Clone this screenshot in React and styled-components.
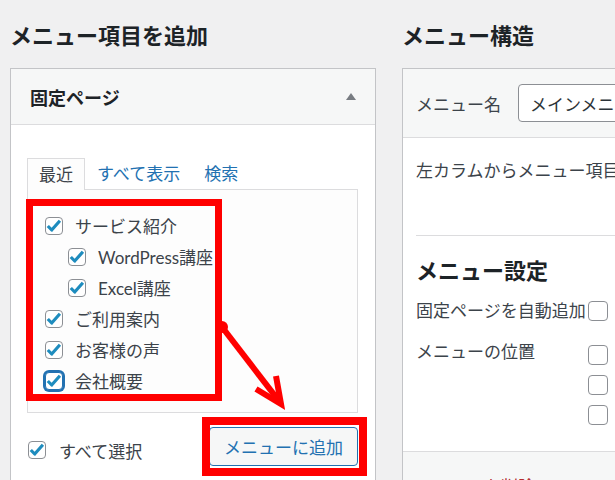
import React from 'react';
import styled, { createGlobalStyle, css } from 'styled-components';

const GlobalStyle = createGlobalStyle`
  body {
    margin: 0;
    background: #f0f0f1;
    font-family: Lato, "Noto Sans CJK JP", sans-serif;
    color: #3c434a;
  }
  * { box-sizing: border-box; }
`;

const Page = styled.div`
  position: relative;
  display: flex;
  gap: 26px;
  width: 615px;
  height: 480px;
  padding-left: 10px;
  overflow: hidden;
  background: #f0f0f1;
`;

const Column = styled.div`
  display: flex;
  flex-direction: column;
  flex: none;
  width: ${(p) => p.$width}px;
  min-height: 0;
`;

const Title = styled.h2`
  flex: none;
  margin: 0;
  height: 68px;
  padding-top: 25px;
  font-size: 22px;
  line-height: 21px;
  font-weight: 700;
  color: #1d2327;
  white-space: nowrap;
`;

const Panel = styled.div`
  flex: 1 0 auto;
  display: flex;
  flex-direction: column;
  background: #fff;
  border: 1px solid #c3c4c7;
  ${(p) => p.$open && css`border-right: none;`}
  & > * { flex-shrink: 0; }
`;

const PanelHeader = styled.div`
  display: flex;
  align-items: center;
  justify-content: space-between;
  height: 56px;
  padding: 0 19px 0 19px;
  background: #f6f7f7;
  border-bottom: 1px solid #dcdcde;
`;

const PanelTitle = styled.h3`
  margin: 0;
  font-size: 18px;
  font-weight: 700;
  color: #1d2327;
`;

const Toggle = styled.span`
  width: 0;
  height: 0;
  border-left: 5px solid transparent;
  border-right: 5px solid transparent;
  border-bottom: 7px solid #787c82;
`;

const PanelBody = styled.div`
  padding: 33px 17px 20px 16px;
`;

const Tabs = styled.div`
  display: flex;
  height: 32px;
`;

const Tab = styled.span`
  padding: 0 12px;
  font-size: 17px;
  line-height: 31px;
  color: #2271b1;
  ${(p) =>
    p.$active &&
    css`
      position: relative;
      z-index: 1;
      padding: 0 11px;
      color: #3c434a;
      background: #fdfdfd;
      border: 1px solid #dcdcde;
      border-bottom: none;
      height: 32px;
    `}
`;

const TabPanel = styled.div`
  height: 224px;
  margin-top: -1px;
  padding: 20px 0 0 17px;
  background: #fdfdfd;
  border: 1px solid #dcdcde;
`;

const Row = styled.label`
  display: flex;
  align-items: center;
  gap: 12px;
  height: 31px;
  padding-left: ${(p) => (p.$depth || 0) * 23}px;
  font-size: 17px;
  color: #3c434a;
  white-space: nowrap;
`;

const Box = styled.span`
  flex: none;
  display: flex;
  align-items: center;
  justify-content: center;
  width: ${(p) => p.$size || 18}px;
  height: ${(p) => p.$size || 18}px;
  background: #fff;
  border: 1px solid #8c8f94;
  border-radius: 4px;
  ${(p) =>
    p.$focus &&
    css`
      border-color: #2271b1;
      box-shadow: 0 0 0 2px #2271b1;
    `}
`;

const Check = () => (
  <svg width="16" height="16" viewBox="0 0 16 16">
    <path d="M1.8 8l3.9 4 8.2-9.2" fill="none" stroke="#1e8cbe" strokeWidth="3.2" strokeLinejoin="round" />
  </svg>
);

const CheckBox = ({ checked, focus, size }) => (
  <Box $focus={focus} $size={size}>{checked && <Check />}</Box>
);

const Actions = styled.div`
  display: flex;
  align-items: center;
  justify-content: space-between;
  margin-top: 14px;
`;

const SelectAll = styled(Row)`
  padding: 7px 0 0 1px;
  gap: 13px;
`;

const Button = styled.button`
  height: 39px;
  padding: 0 14px;
  font-family: inherit;
  font-size: 17px;
  color: #2271b1;
  background: #f6f7f7;
  border: 1px solid #2271b1;
  border-radius: 4px;
`;

const NameBar = styled.div`
  display: flex;
  align-items: center;
  gap: 17px;
  height: 69px;
  padding-left: 13px;
  background: #f6f7f7;
  border-bottom: 1px solid #dcdcde;
  font-size: 17px;
  color: #3c434a;
`;

const NameInput = styled.input`
  width: 240px;
  height: 38px;
  padding: 0 11px;
  font-family: inherit;
  font-size: 17px;
  color: #2c3338;
  background: #fff;
  border: 1px solid #8c8f94;
  border-radius: 4px;
`;

const Body = styled.div`
  padding-left: 13px;
`;

const Intro = styled.p`
  margin: 0;
  height: 98px;
  padding-top: 20px;
  font-size: 17px;
  line-height: 25px;
  white-space: nowrap;
  border-bottom: 1px solid #dcdcde;
`;

const SubTitle = styled.h3`
  margin: 0;
  padding-top: 24px;
  font-size: 22px;
  line-height: 21px;
  font-weight: 700;
  color: #1d2327;
`;

const Settings = styled.div`
  display: grid;
  grid-template-columns: 172px 1fr;
  row-gap: 21px;
  margin-top: 15px;
  padding-bottom: 26px;
  font-size: 17px;
`;

const SettingLabel = styled.span`
  line-height: 20px;
  white-space: nowrap;
  padding-top: ${(p) => p.$top || 0}px;
`;

const BoxStack = styled.div`
  display: flex;
  flex-direction: column;
  gap: 10px;
  padding-top: ${(p) => p.$top || 0}px;
`;

const Footer = styled.div`
  flex: 1 0 auto;
  padding: 26px 0 0 13px;
  background: #f6f7f7;
  border-top: 1px solid #dcdcde;
  font-size: 17px;
  line-height: 17px;
  color: #b32d2e;
`;

const Highlight = styled.div`
  position: absolute;
  left: ${(p) => p.$x}px;
  top: ${(p) => p.$y}px;
  width: ${(p) => p.$w}px;
  height: ${(p) => p.$h}px;
  border: ${(p) => p.$t}px solid #ff0000;
  pointer-events: none;
`;

const ArrowLayer = styled.svg`
  position: absolute;
  left: 0;
  top: 0;
  pointer-events: none;
`;

const pages = [
  { label: 'サービス紹介', depth: 0 },
  { label: 'WordPress講座', depth: 1 },
  { label: 'Excel講座', depth: 1 },
  { label: 'ご利用案内', depth: 0 },
  { label: 'お客様の声', depth: 0 },
  { label: '会社概要', depth: 0, focus: true },
];

const App = () => (
  <>
    <GlobalStyle />
    <Page>
      <Column $width={366}>
        <Title>メニュー項目を追加</Title>
        <Panel>
          <PanelHeader>
            <PanelTitle>固定ページ</PanelTitle>
            <Toggle />
          </PanelHeader>
          <PanelBody>
            <Tabs>
              <Tab $active>最近</Tab>
              <Tab>すべて表示</Tab>
              <Tab>検索</Tab>
            </Tabs>
            <TabPanel>
              {pages.map((p) => (
                <Row key={p.label} $depth={p.depth}>
                  <CheckBox checked focus={p.focus} />
                  {p.label}
                </Row>
              ))}
            </TabPanel>
            <Actions>
              <SelectAll>
                <CheckBox checked />
                すべて選択
              </SelectAll>
              <Button>メニューに追加</Button>
            </Actions>
          </PanelBody>
        </Panel>
      </Column>

      <Column $width={420}>
        <Title>メニュー構造</Title>
        <Panel $open>
          <NameBar>
            メニュー名
            <NameInput readOnly value="メインメニュー" />
          </NameBar>
          <Body>
            <Intro>左カラムからメニュー項目を選択してください。</Intro>
            <SubTitle>メニュー設定</SubTitle>
            <Settings>
              <SettingLabel $top={5}>固定ページを自動追加</SettingLabel>
              <BoxStack $top={5}>
                <CheckBox size={20} />
              </BoxStack>
              <SettingLabel>メニューの位置</SettingLabel>
              <BoxStack $top={3}>
                <CheckBox size={20} />
                <CheckBox size={20} />
                <CheckBox size={20} />
              </BoxStack>
            </Settings>
          </Body>
          <Footer>メニューを削除</Footer>
        </Panel>
      </Column>

      <Highlight $x={26} $y={199} $w={196} $h={202} $t={7} />
      <Highlight $x={202} $y={417} $w={165} $h={59} $t={8} />
      <ArrowLayer width="615" height="480" viewBox="0 0 615 480">
        <circle cx="222" cy="327" r="6" fill="#ff0000" />
        <line x1="222" y1="327" x2="279" y2="401" stroke="#ff0000" strokeWidth="6" />
        <polyline points="256,389 281,404 276,376" fill="none" stroke="#ff0000" strokeWidth="6" strokeLinejoin="miter" />
      </ArrowLayer>
    </Page>
  </>
);

export default App;
